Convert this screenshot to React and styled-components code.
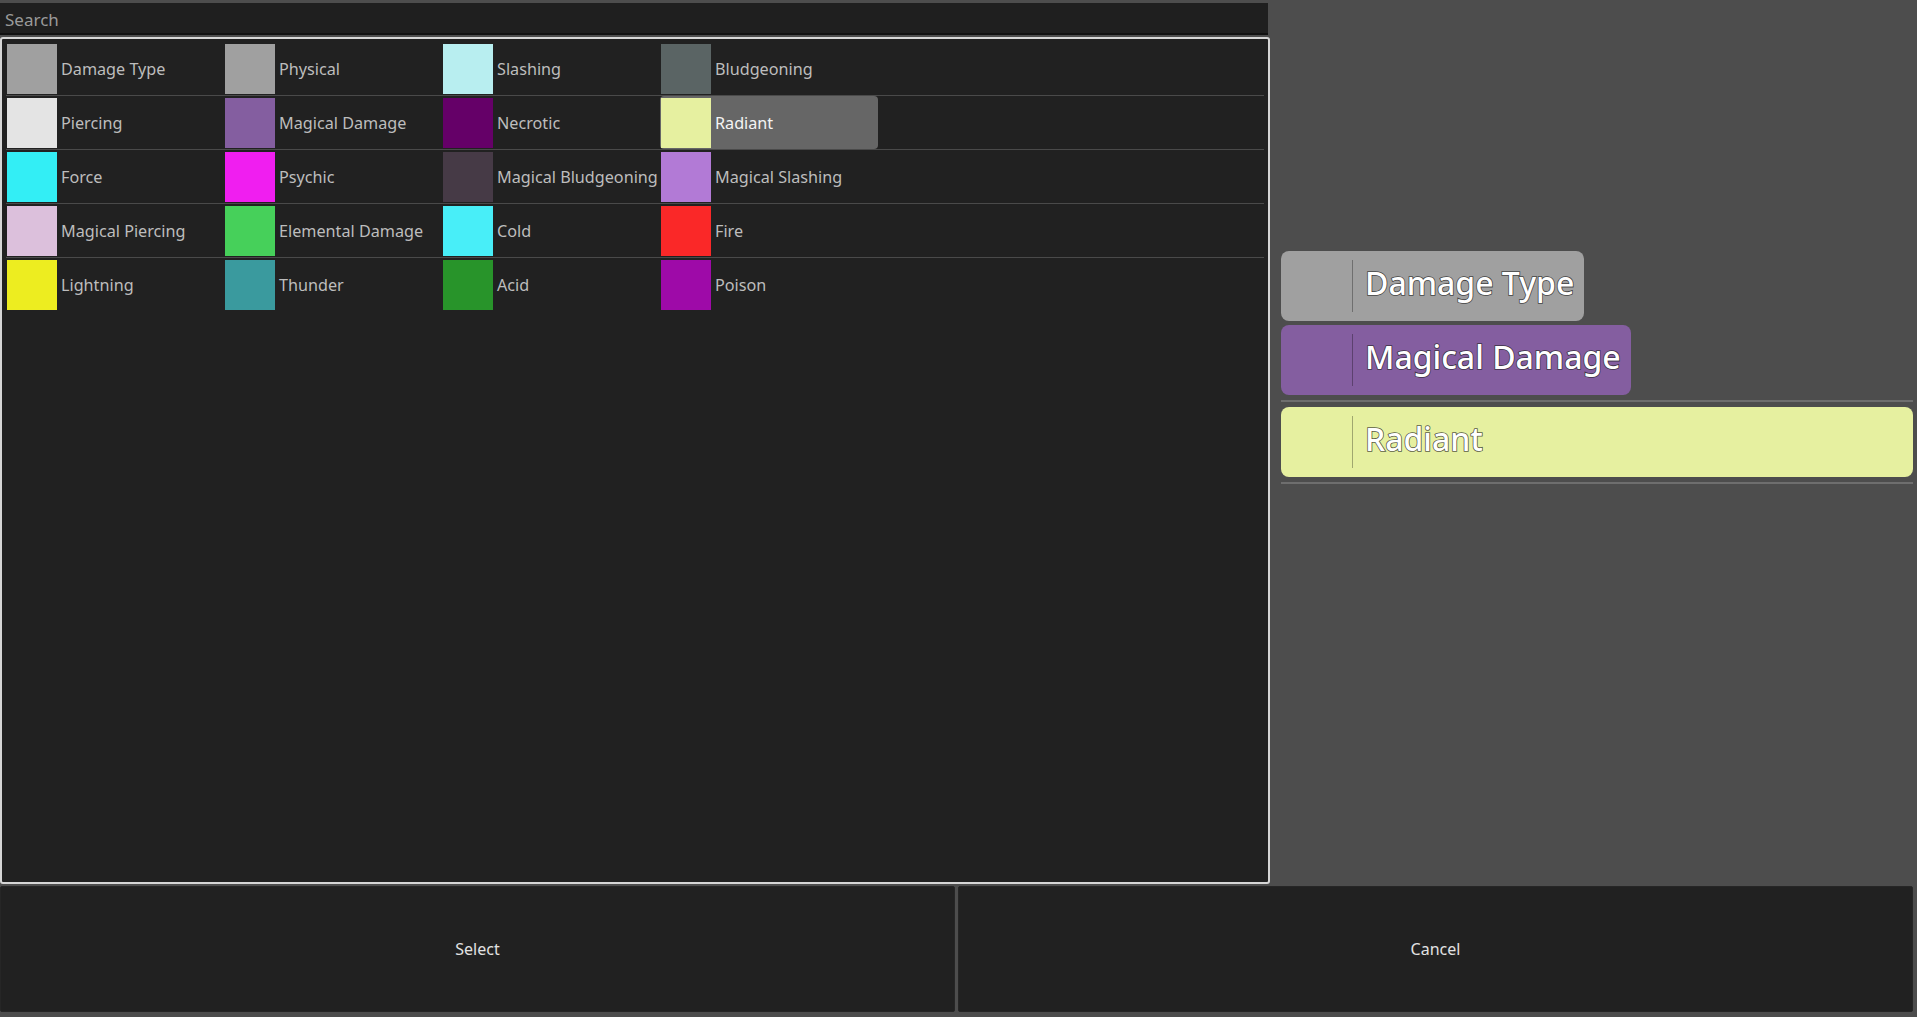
import React from "react";
import styled, { createGlobalStyle } from "styled-components";

const GlobalStyle = createGlobalStyle`
  html, body {
    margin: 0;
    padding: 0;
    background: #4d4d4d;
    font-family: "Noto Sans", "Open Sans", sans-serif;
  }
  * { box-sizing: border-box; }
`;

// list of damage types shown in the picker grid
const types = [
  { name: "Damage Type", color: "#a0a0a0" },
  { name: "Physical", color: "#a0a0a0" },
  { name: "Slashing", color: "#b8eef0" },
  { name: "Bludgeoning", color: "#5a6464" },
  { name: "Piercing", color: "#e4e4e4" },
  { name: "Magical Damage", color: "#845ea0" },
  { name: "Necrotic", color: "#650068" },
  { name: "Radiant", color: "#e6f0a0" },
  { name: "Force", color: "#33eef5" },
  { name: "Psychic", color: "#f01ef0" },
  { name: "Magical Bludgeoning", color: "#463a46" },
  { name: "Magical Slashing", color: "#b27ad6" },
  { name: "Magical Piercing", color: "#dcc0dc" },
  { name: "Elemental Damage", color: "#46d05a" },
  { name: "Cold", color: "#48eef8" },
  { name: "Fire", color: "#fa2828" },
  { name: "Lightning", color: "#eded20" },
  { name: "Thunder", color: "#3a9a9e" },
  { name: "Acid", color: "#28942a" },
  { name: "Poison", color: "#9e0aa8" },
];

const rows = [];
for (let i = 0; i < types.length; i += 4) rows.push(types.slice(i, i + 4));

const App = () => {
  const selected = "Radiant";
  return (
    <Page>
      <GlobalStyle />
      <Top>
        <LeftCol>
          <SearchInput placeholder="Search" />
          <Panel>
            {rows.map((row, r) => (
              <Row key={r} $last={r === rows.length - 1}>
                {row.map((t) => (
                  <Cell key={t.name} $active={t.name === selected}>
                    <Swatch $color={t.color} />
                    <Label $active={t.name === selected}>{t.name}</Label>
                  </Cell>
                ))}
              </Row>
            ))}
          </Panel>
        </LeftCol>
        <RightCol>
          <Chip $color="#a0a0a0">
            <ChipIcon />
            <ChipText>Damage Type</ChipText>
          </Chip>
          <Chip $color="#845ea0">
            <ChipIcon />
            <ChipText>Magical Damage</ChipText>
          </Chip>
          <Divider />
          <Chip $color="#e6f0a0" $full>
            <ChipIcon />
            <ChipText>Radiant</ChipText>
          </Chip>
          <Divider />
        </RightCol>
      </Top>
      <Buttons>
        <ActionButton>Select</ActionButton>
        <ActionButton>Cancel</ActionButton>
      </Buttons>
    </Page>
  );
};

const Page = styled.div`
  width: 1917px;
  height: 1017px;
  display: flex;
  flex-direction: column;
  background: #4d4d4d;
  overflow: hidden;
`;

const Top = styled.div`
  display: flex;
  flex-direction: row;
  height: 886px;
`;

const LeftCol = styled.div`
  width: 1270px;
  display: flex;
  flex-direction: column;
  padding-top: 3px;
`;

const SearchInput = styled.input`
  height: 32px;
  width: 1268px;
  background: #1f1f1f;
  border: none;
  border-bottom: 2px solid #111;
  color: #ccc;
  font-family: "Noto Sans", sans-serif;
  font-size: 17px;
  padding: 2px 5px 0;
  outline: none;
  &::placeholder {
    color: #9a9a9a;
  }
`;

const Panel = styled.div`
  margin-top: 2px;
  height: 847px;
  background: #212121;
  border: 2px solid #d6d6d6;
  border-radius: 3px;
  padding: 3px 4px;
`;

const Row = styled.div`
  display: flex;
  flex-direction: row;
  height: 54px;
  border-bottom: ${(p) => (p.$last ? "none" : "1px solid #4a4a4a")};
`;

const Cell = styled.div`
  width: 218px;
  height: 53px;
  display: flex;
  align-items: center;
  gap: 4px;
  padding-left: 1px;
  border-radius: 4px;
  background: ${(p) => (p.$active ? "#666666" : "transparent")};
`;

const Swatch = styled.div`
  width: 50px;
  height: 50px;
  flex: none;
  background: ${(p) => p.$color};
`;

const Label = styled.span`
  font-size: 16.2px;
  color: ${(p) => (p.$active ? "#f4f4f4" : "#bdbdbd")};
  white-space: nowrap;
`;

const RightCol = styled.div`
  flex: 1;
  display: flex;
  flex-direction: column;
  align-items: flex-start;
  gap: 4px;
  padding: 251px 4px 0 11px;
`;

const Chip = styled.div`
  height: 70px;
  display: flex;
  align-items: center;
  padding-right: 10px;
  border-radius: 8px;
  background: ${(p) => p.$color};
  align-self: ${(p) => (p.$full ? "stretch" : "flex-start")};
`;

const ChipIcon = styled.div`
  width: 72px;
  height: 52px;
  border-right: 1px solid rgba(0, 0, 0, 0.3);
  margin-right: 12px;
`;

const ChipText = styled.span`
  font-size: 32px;
  font-weight: 500;
  line-height: 1;
  margin-bottom: 6px;
  color: #ffffff;
  white-space: nowrap;
  -webkit-text-stroke: 1.6px rgba(30, 30, 30, 0.75);
  paint-order: stroke fill;
`;

const Divider = styled.div`
  align-self: stretch;
  height: 2px;
  background: #6e6e6e;
  margin: 1px 0;
`;

const Buttons = styled.div`
  display: flex;
  flex-direction: row;
  gap: 3px;
  height: 126px;
  padding-right: 4px;
`;

const ActionButton = styled.button`
  flex: 1;
  background: #212121;
  border: 1px solid #262626;
  border-radius: 2px;
  color: #e2e2e2;
  font-family: "Noto Sans", sans-serif;
  font-size: 16px;
`;

export default App;
